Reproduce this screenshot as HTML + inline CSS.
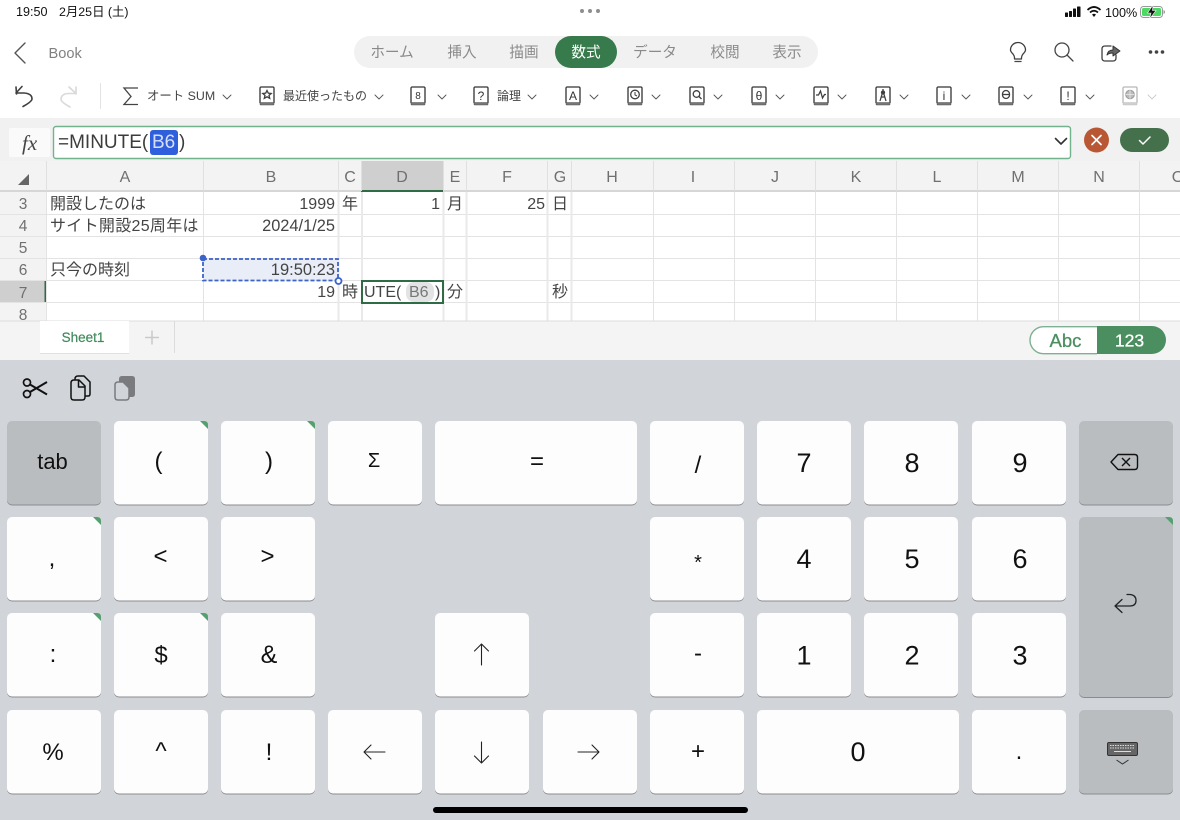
<!DOCTYPE html>
<html lang="ja"><head><meta charset="utf-8"><title>Excel</title>
<style>
html,body{margin:0;padding:0;background:#fff;width:1180px;height:820px;overflow:hidden}
svg{display:block;font-family:"Liberation Sans","Noto Sans CJK JP",sans-serif}
.c{font-size:16px;fill:#444}
.h{font-size:16px;fill:#707070;text-anchor:middle}
.k{fill:#fdfdfd;stroke:none;filter:url(#s)}
.g{fill:#babdc0;filter:url(#s)}
.l{font-size:24px;fill:#111;text-anchor:middle}
.d{font-size:27px;fill:#111;text-anchor:middle}
.tb{font-size:14.6px;fill:#8a8a8a;text-anchor:middle}
.rb{font-size:12px;fill:#444}
.i{fill:none;stroke:#444;stroke-width:1.5;stroke-linecap:round;stroke-linejoin:round}
.ch{fill:none;stroke:#555;stroke-width:.9;stroke-linecap:round;stroke-linejoin:round}
.b{fill:none;stroke:#3f3f3f;stroke-width:1.3}
.a{fill:none;stroke:#222;stroke-width:1.1;stroke-linecap:round;stroke-linejoin:round}
.t{fill:#55a06f}
.gr{stroke:#e3e3e3;stroke-width:1}
.gt{stroke:#e9e9e9;stroke-width:2}
</style></head><body>
<svg width="1180" height="820" viewBox="0 0 1180 820" xmlns="http://www.w3.org/2000/svg">
<defs>
<filter id="s" x="-5%" y="-5%" width="110%" height="110%"><feDropShadow dx="0" dy="1" stdDeviation="0.2" flood-color="#8a8b8f" flood-opacity="1"/></filter>
<symbol id="bk" viewBox="0 0 16 20" width="16" height="20"><path d="M1 17V2.2Q1 1 2.2 1H13.800Q15 1 15 2.200V17" fill="none" stroke="#333" stroke-width="1.300"/><path d="M1 16.500H15V18Q15 19 14 19H2Q1 19 1 18Z" fill="#777" stroke="#555" stroke-width=".6"/></symbol>
</defs>
<rect width="1180" height="820" fill="#fff"/>

<!-- status bar -->
<text x="16" y="16" font-size="12.6" fill="#111">19:50</text>
<text x="59" y="16" font-size="12.4" fill="#111">2月25日 (土)</text>
<g fill="#8e8e8e"><circle cx="582" cy="11" r="2"/><circle cx="590" cy="11" r="2"/><circle cx="598" cy="11" r="2"/></g>
<g fill="#111"><rect x="1065" y="12.500" width="3" height="4.500" rx=".6"/><rect x="1069" y="11" width="3" height="6" rx=".6"/><rect x="1073" y="8.500" width="3" height="8.500" rx=".6"/><rect x="1077" y="6.500" width="3.500" height="10.500" rx=".6"/></g>
<path d="M1087.500 10Q1094 4 1100.500 10M1090 12.500Q1094 9 1098 12.500" fill="none" stroke="#111" stroke-width="1.800"/><path d="M1092 14.500Q1094 13 1096 14.500L1094 17Z" fill="#111"/>
<text x="1105" y="17" font-size="12.6" fill="#111">100%</text>
<rect x="1140.500" y="6.500" width="22" height="11" rx="3" fill="none" stroke="#999"/><rect x="1142" y="8" width="19" height="8" rx="1.600" fill="#4cd964"/><path d="M1163.500 10v4q1.500-.5 1.500-2t-1.500-2z" fill="#999"/>
<path d="M1153 5 1147.500 13H1151L1149.500 19 1156 10.500H1152.500Z" fill="#111" stroke="#fff" stroke-width=".6"/>

<!-- title row -->
<path d="M25 43 15 53 25 63" fill="none" stroke="#555" stroke-width="1.400" stroke-linecap="round" stroke-linejoin="round"/>
<text x="48.500" y="58" font-size="14.600" fill="#808080">Book</text>
<rect x="354" y="36" width="464" height="32" rx="16" fill="#f1f1f1"/>
<rect x="555" y="36" width="62" height="32" rx="16" fill="#377a4b"/>
<text class="tb" x="392" y="57">ホーム</text>
<text class="tb" x="462" y="57">挿入</text>
<text class="tb" x="524" y="57">描画</text>
<text class="tb" x="586" y="57" style="fill:#fff">数式</text>
<text class="tb" x="655" y="57">データ</text>
<text class="tb" x="725" y="57">校閲</text>
<text class="tb" x="787" y="57">表示</text>
<!-- right icons -->
<path d="M1014.500 59V57.500Q1014.500 56 1013 54Q1010.500 51.500 1010.500 50A7.500 7.500 0 0 1 1025.500 50Q1025.500 51.500 1023 54Q1021.500 56 1021.500 57.500V59Z" class="i" style="stroke:#3f3f3f;stroke-width:1.300"/>
<path d="M1015 61.500H1021" class="i" style="stroke-width:1.300"/>
<circle cx="1062" cy="50" r="7" class="i" style="stroke-width:1.300"/><path d="M1067 55 1073 61" class="i" style="stroke-width:1.300"/>
<path d="M1111 46H1105Q1102 46 1102 49V58Q1102 61 1105 61H1113Q1116 61 1116 58V55" class="i" style="stroke:#3f3f3f;stroke-width:1.300"/>
<path d="M1107 55Q1108 50 1113 50V46L1120 51 1113 56V53Q1109 53 1107 55Z" fill="#666" stroke="#333" stroke-width="1" stroke-linejoin="round"/>
<g fill="#444"><circle cx="1150.500" cy="52" r="1.800"/><circle cx="1156.500" cy="52" r="1.800"/><circle cx="1162.500" cy="52" r="1.800"/></g>

<!-- ribbon -->
<path d="M22 87 16 93.500 24 93.500Q32 94 32 99.500Q32 102 23 107" transform="translate(0,-.5)" fill="none" stroke="#3f3f3f" stroke-width="1.600" stroke-linecap="round" stroke-linejoin="round"/>
<path d="M16 87 16.500 94" stroke="#3f3f3f" stroke-width="1.600" stroke-linecap="round"/>
<path d="M69 87 76 93.500H68Q61 94 61 99.500Q61 102 70 107M76 87 76 94" fill="none" stroke="#d9d9d9" stroke-width="1.600" stroke-linecap="round" stroke-linejoin="round"/>
<path d="M100.500 83V109" stroke="#e3e3e3"/>
<path d="M138 88H124L131 96.500 124 104.500H138" fill="none" stroke="#444" stroke-width="1.300"/>
<text class="rb" x="147" y="100" style="font-size:12.400px">オート SUM</text>
<path class="ch" d="M223 95 227 99 231 95"/>

<use href="#bk" x="259" y="86"/><path d="M267 90.500 268.300 93.200 271.200 93.500 269 95.400 269.700 98.300 267 96.800 264.300 98.300 265 95.400 262.800 93.500 265.700 93.200Z" class="b"/>
<text class="rb" x="283" y="100">最近使ったもの</text>
<path class="ch" d="M375 95 379 99 383 95"/>
<use href="#bk" x="410" y="86"/><text x="418" y="99" font-size="10" fill="#333" text-anchor="middle">8</text>
<path class="ch" d="M438 95 442 99 446 95"/>
<use href="#bk" x="473" y="86"/><text x="481" y="100" font-size="12" fill="#333" text-anchor="middle">?</text>
<text class="rb" x="497" y="100">論理</text>
<path class="ch" d="M528 95 532 99 536 95"/>
<use href="#bk" x="565" y="86"/><text x="573" y="100" font-size="12" fill="#333" text-anchor="middle">A</text>
<path class="ch" d="M590 95 594 99 598 95"/>
<use href="#bk" x="627" y="86"/><circle cx="635" cy="94.500" r="4.300" class="b"/><path d="M635 92V95L637 96" class="b" style="stroke-width:1"/>
<path class="ch" d="M652 95 656 99 660 95"/>
<use href="#bk" x="689" y="86"/><circle cx="696.500" cy="94" r="3.300" class="b"/><path d="M699 96.500 701.500 99" class="b"/>
<path class="ch" d="M714 95 718 99 722 95"/>
<use href="#bk" x="751" y="86"/><text x="759" y="100" font-size="12" fill="#333" text-anchor="middle">θ</text>
<path class="ch" d="M776 95 780 99 784 95"/>
<use href="#bk" x="813" y="86"/><path d="M816 95H818.500L820.500 91 822.500 98 824.500 94.500H826" class="b"/>
<path class="ch" d="M838 95 842 99 846 95"/>
<use href="#bk" x="875" y="86"/><path d="M883 89V91M883 91 880 101M883 91 886 101M881 97H885" class="b"/><circle cx="883" cy="92.500" r="1.500" class="b"/>
<path class="ch" d="M900 95 904 99 908 95"/>
<use href="#bk" x="936" y="86"/><text x="944" y="100" font-size="12" fill="#333" text-anchor="middle">i</text>
<path class="ch" d="M962 95 966 99 970 95"/>
<use href="#bk" x="998" y="86"/><rect x="1002.500" y="90.500" width="7" height="8" rx="3.500" class="b"/><path d="M1002.500 94.500H1009.500" class="b"/>
<path class="ch" d="M1024 95 1028 99 1032 95"/>
<use href="#bk" x="1060" y="86"/><text x="1068" y="100" font-size="12" fill="#333" text-anchor="middle">!</text>
<path class="ch" d="M1086 95 1090 99 1094 95"/>
<use href="#bk" x="1122" y="86" opacity=".35"/><circle cx="1130" cy="94.500" r="4.300" fill="#bbb" stroke="#999"/><path d="M1130 90V99M1125.700 94.500H1134.300" stroke="#eee" stroke-width=".7"/>
<path class="ch" style="stroke:#ccc" d="M1148 95 1152 99 1156 95"/>

<!-- formula bar -->
<rect x="0" y="118" width="1180" height="43" fill="#f1f1f1"/>
<rect x="9" y="128" width="41" height="29" rx="2" fill="#fafafa"/>
<text x="22" y="150" font-family="Liberation Serif" font-style="italic" font-size="21" fill="#444">fx</text>
<rect x="53.500" y="126.500" width="1017" height="32" rx="2.500" fill="#fff" stroke="#72b28c" stroke-width="1.400"/>
<rect x="150" y="130" width="28" height="25" rx="3" fill="#2f5fdc"/>
<text x="58" y="148" font-size="19" fill="#3c3c3c">=MINUTE(</text>
<text x="152" y="148" font-size="19" fill="#d6e0fa">B6</text>
<text x="179" y="148" font-size="19" fill="#3c3c3c">)</text>
<path d="M1055.500 138.500 1061 144 1066.500 138.500" fill="none" stroke="#333" stroke-width="1.600" stroke-linecap="round" stroke-linejoin="round"/>
<circle cx="1096.500" cy="140" r="12.500" fill="#b95735"/>
<path d="M1092 135.500 1101 144.500M1101 135.500 1092 144.500" stroke="#fff" stroke-width="1.700" stroke-linecap="round"/>
<rect x="1120" y="128" width="49" height="24" rx="12" fill="#44704c"/>
<path d="M1139.500 140.500 1143 144 1150 137" fill="none" stroke="#fff" stroke-width="1.500" stroke-linecap="round" stroke-linejoin="round"/>

<!-- column headers -->
<rect x="0" y="161" width="1180" height="31" fill="#f3f3f3"/>
<rect x="361" y="161" width="82" height="30" fill="#cfcfcf"/>
<rect x="0" y="190" width="1180" height="2" fill="#d6d6d6"/>
<rect x="361" y="190" width="82" height="2" fill="#2f6b45"/>
<path d="M18 185 29 174V185Z" fill="#666"/>
<g class="gr"><path d="M46.500 161V191M203.500 161V191M338.500 161V191M361.500 161V191M443.500 161V191M466.500 161V191M547.500 161V191M571.500 161V191M653.500 161V191M734.500 161V191M815.500 161V191M896.500 161V191M977.500 161V191M1058.500 161V191M1139.500 161V191" stroke="#e0e0e0"/></g>
<g class="h">
<text x="125" y="182">A</text><text x="271" y="182">B</text><text x="350" y="182">C</text><text x="402" y="182">D</text><text x="455" y="182">E</text><text x="507" y="182">F</text><text x="560" y="182">G</text><text x="612" y="182">H</text><text x="693" y="182">I</text><text x="775" y="182">J</text><text x="856" y="182">K</text><text x="937" y="182">L</text><text x="1018" y="182">M</text><text x="1099" y="182">N</text><text x="1178" y="182">O</text>
</g>

<!-- row headers -->
<rect x="0" y="192" width="46" height="129" fill="#f3f3f3"/>
<rect x="0" y="281" width="46" height="22" fill="#cfcfcf"/>
<rect x="44.500" y="281" width="2" height="22" fill="#2f6b45"/>
<g class="h" style="font-size:15.500px"><text x="23" y="209">3</text><text x="23" y="231">4</text><text x="23" y="253">5</text><text x="23" y="275">6</text><text x="23" y="298">7</text><text x="23" y="320">8</text></g>

<!-- grid -->
<rect x="46" y="192" width="1134" height="129" fill="#fff"/>
<path class="gr" d="M0 214.500H1180M0 236.500H1180M0 258.500H1180M0 280.500H1180M0 302.500H1180M46.500 192V321M203.500 192V321M653.500 192V321M734.500 192V321M815.500 192V321M896.500 192V321M977.500 192V321M1058.500 192V321M1139.500 192V321"/>
<path class="gt" d="M338.500 192V321M362 192V321M443.500 192V321M466.500 192V321M547.500 192V321M571.500 192V321"/>

<text class="c" x="50" y="209">開設したのは</text>
<text class="c" x="335" y="209" text-anchor="end">1999</text>
<text class="c" x="342" y="209">年</text>
<text class="c" x="440" y="209" text-anchor="end">1</text>
<text class="c" x="447" y="209">月</text>
<text class="c" x="545" y="209" text-anchor="end">25</text>
<text class="c" x="552" y="209">日</text>
<text class="c" x="50" y="231" style="letter-spacing:.3px">サイト開設25周年は</text>
<text class="c" x="335" y="231" text-anchor="end" style="font-size:16.400px">2024/1/25</text>
<text class="c" x="50" y="275">只今の時刻</text>

<rect x="203" y="259" width="135" height="21.500" fill="#e9edf7" stroke="#3b63c9" stroke-width="1.800" stroke-dasharray="4 2"/>
<text class="c" x="335" y="275" text-anchor="end" style="font-size:16.500px">19:50:23</text>
<circle cx="203" cy="258" r="3.300" fill="#3b63c9"/>
<circle cx="338.500" cy="281" r="3" fill="#fff" stroke="#3b63c9" stroke-width="1.800"/>

<text class="c" x="335" y="297" text-anchor="end">19</text>
<text class="c" x="342" y="297">時</text>
<rect x="362" y="281" width="81" height="22" fill="#fff" stroke="#2f6b45" stroke-width="2"/>
<rect x="406" y="282" width="28" height="20" rx="8" fill="#e3e3e3"/>
<text class="c" x="364" y="297">UTE(</text>
<text class="c" x="409" y="297" style="fill:#777">B6</text>
<text class="c" x="435" y="297">)</text>
<text class="c" x="447" y="297">分</text>
<text class="c" x="552" y="297">秒</text>

<!-- sheet bar -->
<rect x="0" y="321" width="1180" height="39" fill="#f4f4f4"/>
<rect x="0" y="320.500" width="1180" height="1" fill="#dcdcdc"/>
<rect x="40" y="321" width="89" height="32" fill="#fff"/>
<path d="M40 353.500H129" stroke="#e0e0e0"/>
<text x="83" y="342" text-anchor="middle" font-size="13.500" fill="#3f8a5a" stroke="#3f8a5a" stroke-width=".2">Sheet1</text>
<path d="M152 330.500V344.500M145 337.500H159" stroke="#c9c9c9" stroke-width="1.500"/>
<path d="M174.500 321V353" stroke="#dcdcdc"/>
<path d="M1097 326.700H1043.500A13.500 13.500 0 0 0 1043.500 353.700H1097" fill="#fff" stroke="#7fb093" stroke-width="1.400"/>
<path d="M1097 326H1152A14 14 0 0 1 1152 354H1097Z" fill="#4b8f60"/>
<text x="1065.500" y="347" text-anchor="middle" font-size="18.500" fill="#4b8f60" stroke="#4b8f60" stroke-width=".3">Abc</text>
<text x="1129.500" y="346.500" text-anchor="middle" font-size="17.500" fill="#fff" stroke="#fff" stroke-width=".3">123</text>

<!-- keyboard -->
<rect x="0" y="360" width="1180" height="460" fill="#d1d4d9"/>
<!-- scissors -->
<g fill="none" stroke="#111" stroke-width="1.700"><circle cx="27" cy="382.500" r="3.500"/><circle cx="27" cy="394" r="3.500"/><path d="M30 384.500 47 394.500M30 392 47 382" stroke-width="2"/></g>
<!-- copy -->
<g fill="none" stroke="#111" stroke-width="1.500" stroke-linejoin="round"><path d="M75 381V379Q75 376 78 376H84L90 382V394Q90 396 88 396H85"/><path d="M71 383Q71 380 74 380H79L85 386V397Q85 400 82 400H74Q71 400 71 397Z" fill="#d1d4d9"/><path d="M78.500 380.500V387H85"/></g>
<!-- paste -->
<path d="M119 379Q119 376 122 376H132Q135 376 135 379V394Q135 397 132 397H119Z" fill="#7a7b7e"/>
<path d="M115 385Q115 382 118 382H123L129 388V397Q129 400 126 400H118Q115 400 115 397Z" fill="#d1d4d9" stroke="#7a7b7e" stroke-width="1.500" stroke-linejoin="round"/>

<!-- row 1 -->
<rect class="g" x="7" y="421" width="94" height="83.500" rx="5"/><text x="52.500" y="469" text-anchor="middle" font-size="22" fill="#111">tab</text>
<rect class="k" x="114" y="421" width="94" height="83.500" rx="5"/><path class="t" d="M200 421H204Q208 421 208 425V429Z"/><text class="l" x="158.500" y="469">(</text>
<rect class="k" x="221" y="421" width="94" height="83.500" rx="5"/><path class="t" d="M307 421H311Q315 421 315 425V429Z"/><text class="l" x="269" y="469">)</text>
<rect class="k" x="328" y="421" width="94" height="83.500" rx="5"/><text class="l" x="374" y="467" style="font-size:20px">Σ</text>
<rect class="k" x="435" y="421" width="202" height="83.500" rx="5"/><text class="l" x="537" y="469">=</text>
<rect class="k" x="650" y="421" width="94" height="83.500" rx="5"/><text class="l" x="698" y="473">/</text>
<rect class="k" x="757" y="421" width="94" height="83.500" rx="5"/><text class="d" x="804" y="472">7</text>
<rect class="k" x="864" y="421" width="94" height="83.500" rx="5"/><text class="d" x="912" y="472">8</text>
<rect class="k" x="972" y="421" width="94" height="83.500" rx="5"/><text class="d" x="1020" y="472">9</text>
<rect class="g" x="1079" y="421" width="94" height="83.500" rx="5"/>
<path d="M1118 454.500H1134.500Q1137.500 454.500 1137.500 457.500V466.500Q1137.500 469.500 1134.500 469.500H1118L1111 462Z" fill="none" stroke="#111" stroke-width="1.400" stroke-linejoin="round"/><path d="M1122 458 1130 466M1130 458 1122 466" stroke="#111" stroke-width="1.400"/>

<!-- row 2 -->
<rect class="k" x="7" y="517" width="94" height="83.500" rx="5"/><path class="t" d="M93 517H97Q101 517 101 521V525Z"/><text class="l" x="52" y="566">,</text>
<rect class="k" x="114" y="517" width="94" height="83.500" rx="5"/><text class="l" x="160.500" y="564">&lt;</text>
<rect class="k" x="221" y="517" width="94" height="83.500" rx="5"/><text class="l" x="267.500" y="564">&gt;</text>
<rect class="k" x="650" y="517" width="94" height="83.500" rx="5"/><text class="l" x="698" y="569" style="font-size:20px">*</text>
<rect class="k" x="757" y="517" width="94" height="83.500" rx="5"/><text class="d" x="804" y="568">4</text>
<rect class="k" x="864" y="517" width="94" height="83.500" rx="5"/><text class="d" x="912" y="568">5</text>
<rect class="k" x="972" y="517" width="94" height="83.500" rx="5"/><text class="d" x="1020" y="568">6</text>
<rect class="g" x="1079" y="517" width="94" height="180" rx="5"/><path class="t" d="M1165 517H1169Q1173 517 1173 521V525Z"/>
<path d="M1127 594.500H1130Q1136 595 1136 600.500Q1136 606 1130 606H1115M1122 599.500 1115 606 1122 612.500" fill="none" stroke="#222" stroke-width="1.300" stroke-linecap="round" stroke-linejoin="round"/>

<!-- row 3 -->
<rect class="k" x="7" y="613" width="94" height="83.500" rx="5"/><path class="t" d="M93 613H97Q101 613 101 617V621Z"/><text class="l" x="53" y="662">:</text>
<rect class="k" x="114" y="613" width="94" height="83.500" rx="5"/><path class="t" d="M200 613H204Q208 613 208 617V621Z"/><text class="l" x="161" y="663">$</text>
<rect class="k" x="221" y="613" width="94" height="83.500" rx="5"/><text class="l" x="269" y="663" style="font-size:25px">&amp;</text>
<rect class="k" x="435" y="613" width="94" height="83.500" rx="5"/><path class="a" d="M481.500 665V644M474.500 651 481.500 644 488.500 651"/>
<rect class="k" x="650" y="613" width="94" height="83.500" rx="5"/><text class="l" x="698" y="661">-</text>
<rect class="k" x="757" y="613" width="94" height="83.500" rx="5"/><text class="d" x="804" y="664.500">1</text>
<rect class="k" x="864" y="613" width="94" height="83.500" rx="5"/><text class="d" x="912" y="664.500">2</text>
<rect class="k" x="972" y="613" width="94" height="83.500" rx="5"/><text class="d" x="1020" y="664.500">3</text>

<!-- row 4 -->
<rect class="k" x="7" y="710" width="94" height="83.500" rx="5"/><text class="l" x="53" y="760">%</text>
<rect class="k" x="114" y="710" width="94" height="83.500" rx="5"/><text class="l" x="161" y="759">^</text>
<rect class="k" x="221" y="710" width="94" height="83.500" rx="5"/><text class="l" x="269" y="760">!</text>
<rect class="k" x="328" y="710" width="94" height="83.500" rx="5"/><path class="a" d="M385 752H364M371 745 364 752 371 759"/>
<rect class="k" x="435" y="710" width="94" height="83.500" rx="5"/><path class="a" d="M481.500 742V763M474.500 756 481.500 763 488.500 756"/>
<rect class="k" x="543" y="710" width="94" height="83.500" rx="5"/><path class="a" d="M578 752H599M592 745 599 752 592 759"/>
<rect class="k" x="650" y="710" width="94" height="83.500" rx="5"/><text class="l" x="698" y="759">+</text>
<rect class="k" x="757" y="710" width="202" height="83.500" rx="5"/><text class="d" x="858" y="761">0</text>
<rect class="k" x="972" y="710" width="94" height="83.500" rx="5"/><text class="l" x="1019" y="759">.</text>
<rect class="g" x="1079" y="710" width="94" height="83.500" rx="5"/>
<rect x="1107.500" y="742.500" width="30" height="13" rx="1.500" fill="#666" stroke="#333" stroke-width="1"/>
<path d="M1110 745.500H1135M1110 748H1135" stroke="#ddd" stroke-width="1" stroke-dasharray="1.500 1"/><path d="M1114 751.500H1131" stroke="#ddd" stroke-width="1"/>
<path d="M1116.500 760 1122.500 764 1128.500 760" fill="none" stroke="#333" stroke-width="1"/>

<rect x="433" y="807" width="315" height="6" rx="3" fill="#000"/>
</svg>
</body></html>
